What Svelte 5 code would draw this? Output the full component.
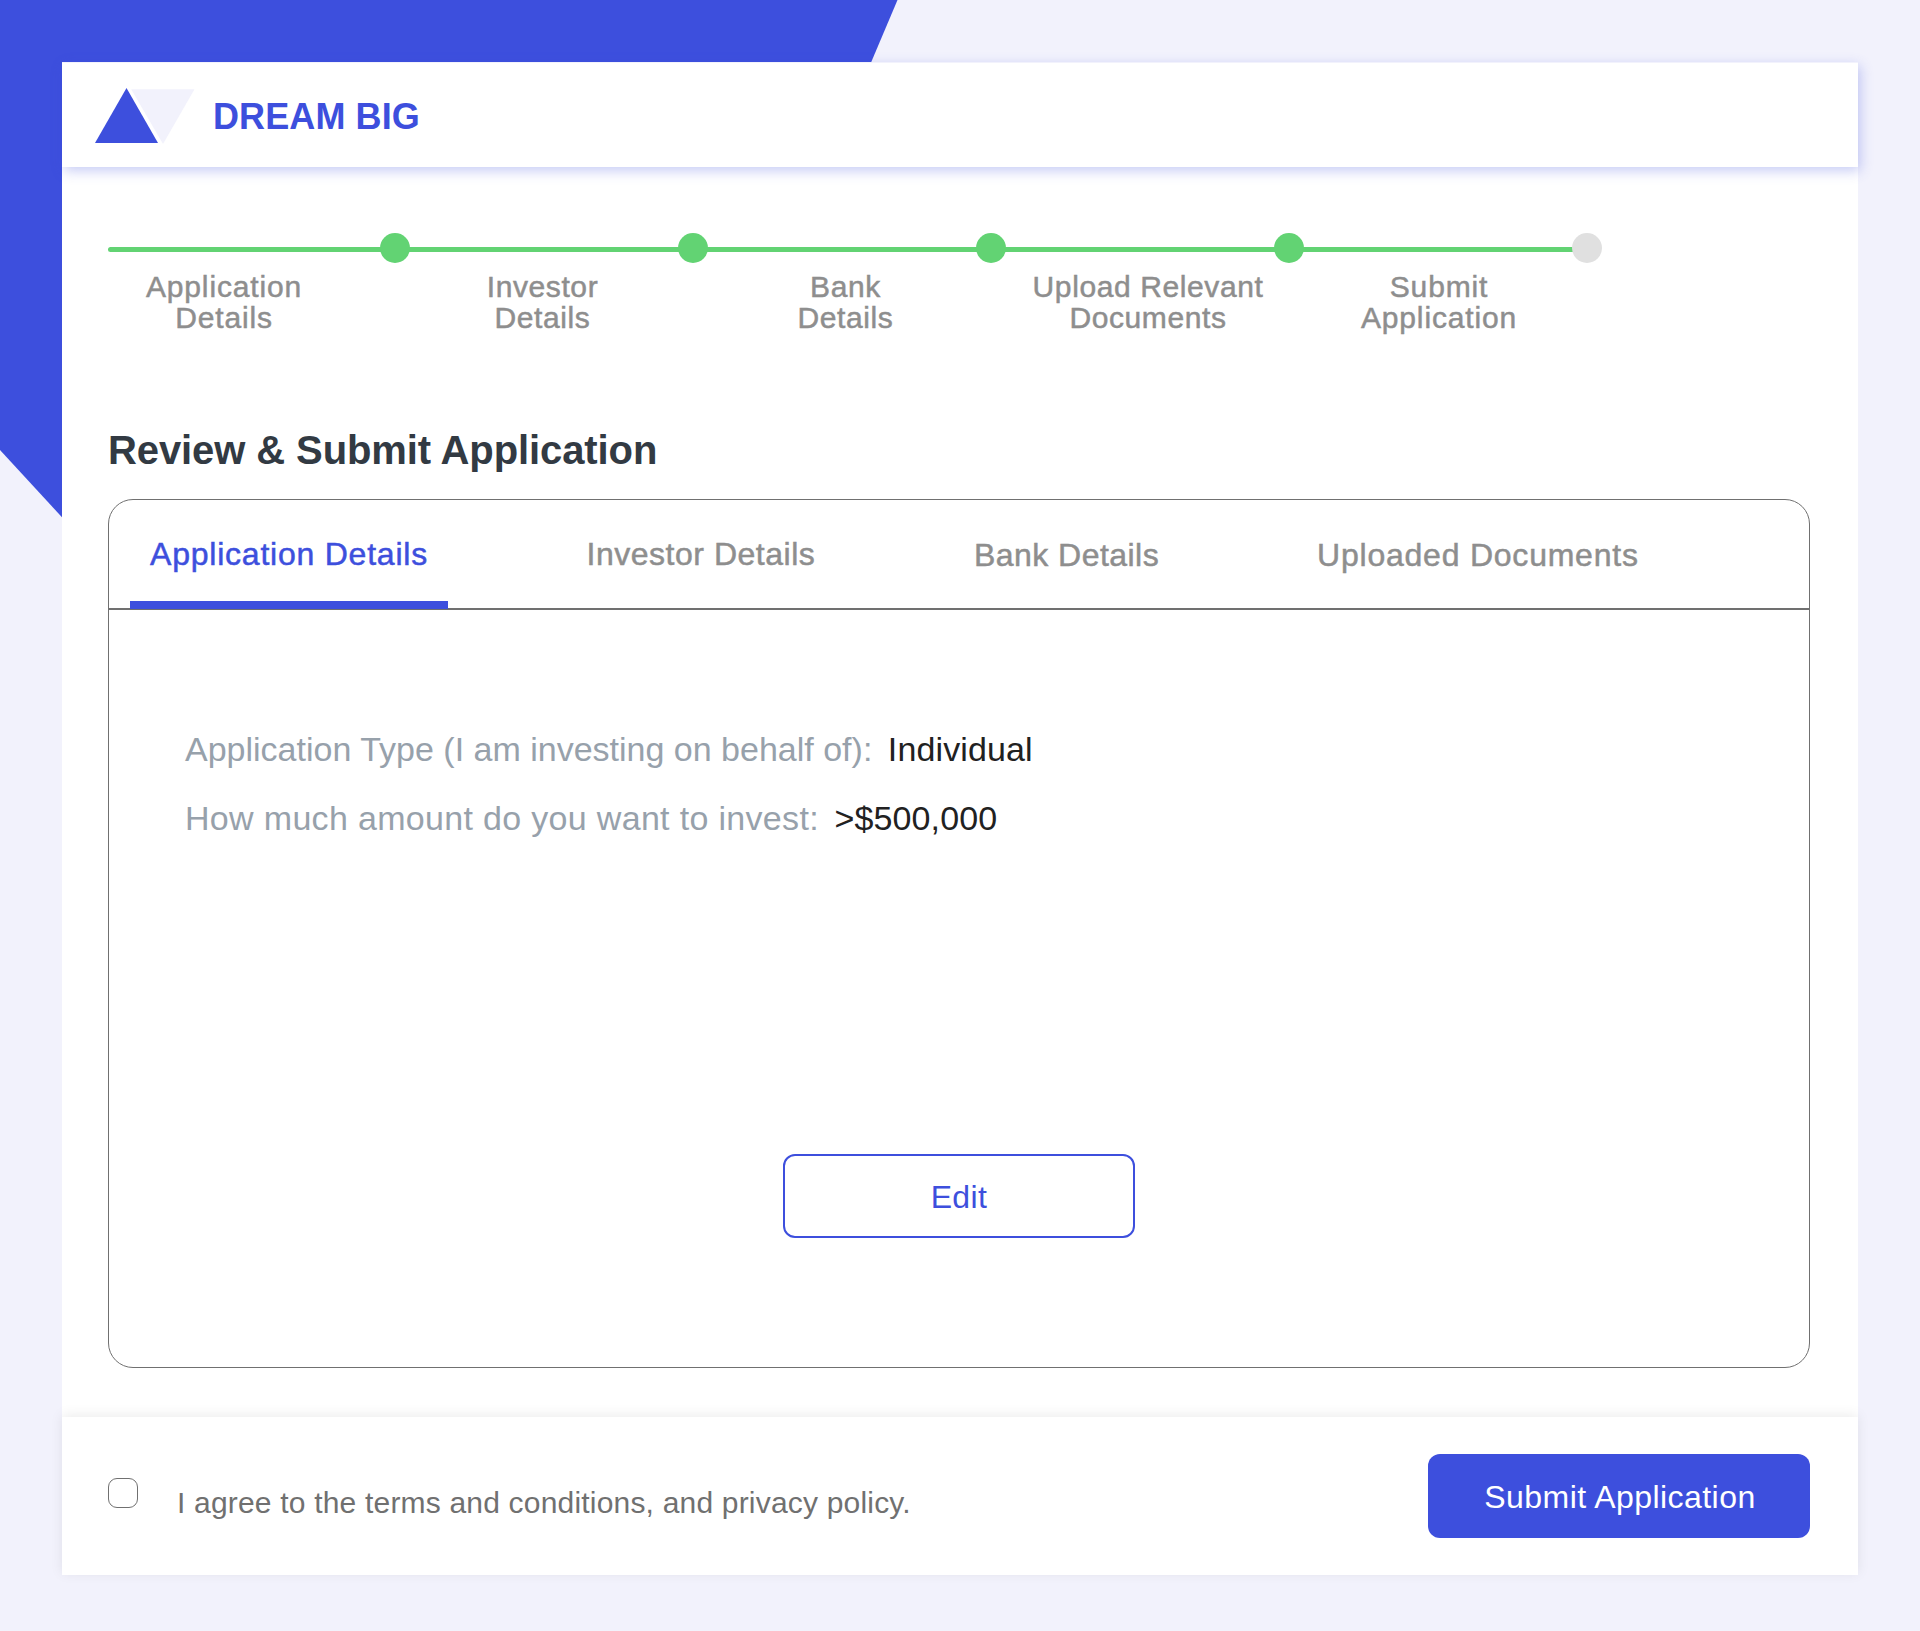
<script>
  const steps = [
    { title: ['Application', 'Details'], done: true },
    { title: ['Investor', 'Details'], done: true },
    { title: ['Bank', 'Details'], done: true },
    { title: ['Upload Relevant', 'Documents'], done: true },
    { title: ['Submit', 'Application'], done: false }
  ];
  const tabs = ['Application Details', 'Investor Details', 'Bank Details', 'Uploaded Documents'];
  const details = [
    { label: 'Application Type (I am investing on behalf of):', value: 'Individual' },
    { label: 'How much amount do you want to invest:', value: '>$500,000' }
  ];
  let active = $state(0);
  let agreed = $state(false);
</script>

<div class="page">
  <svg class="backdrop" width="900" height="600" viewBox="0 0 900 600" aria-hidden="true">
    <polygon points="0,0 897.5,0 845,124 200,667 0,450" />
  </svg>

  <main class="card">
    <header class="header">
      <svg class="logo" width="100" height="56" viewBox="0 0 100 56" aria-hidden="true">
        <polygon class="logo-light" points="36.2,1.2 99.5,1.2 68,56" />
        <polygon class="logo-dark" points="31.5,0 63,55 0,55" />
      </svg>
      <span class="brand">DREAM BIG</span>
    </header>

    <section class="content">
      <div class="track">
        {#each steps as step}
          <span class="segment"></span>
          <span class="dot" class:done={step.done}></span>
        {/each}
      </div>
      <div class="labels">
        {#each steps as step}
          <div class="label">{step.title[0]}<br />{step.title[1]}</div>
        {/each}
      </div>

      <h1>Review &amp; Submit Application</h1>

      <div class="panel">
        <nav class="tabs">
          {#each tabs as tab, i}
            <button class="tab" class:active={active === i} onclick={() => (active = i)}>{tab}</button>
          {/each}
        </nav>
        <div class="details">
          {#each details as row}
            <div class="row"><span class="key">{row.label}</span><span class="value">{row.value}</span></div>
          {/each}
        </div>
        <button class="edit">Edit</button>
      </div>
    </section>

    <footer class="footer">
      <label class="agree">
        <input type="checkbox" bind:checked={agreed} />
        <span>I agree to the terms and conditions, and privacy policy.</span>
      </label>
      <button class="submit">Submit Application</button>
    </footer>
  </main>
</div>

<style>
  :global(body) {
    margin: 0;
    background: #f2f2fc;
  }
  .page {
    position: relative;
    box-sizing: border-box;
    width: 1920px;
    height: 1631px;
    padding: 62px;
    overflow: hidden;
    background: #f2f2fc;
    font-family: 'Liberation Sans', Arial, sans-serif;
  }
  .page * {
    box-sizing: border-box;
  }
  .backdrop {
    position: absolute;
    top: 0;
    left: 0;
    fill: #3d4fdd;
  }
  button {
    font-family: inherit;
    margin: 0;
    padding: 0;
    border: 0;
    background: none;
    cursor: pointer;
    white-space: nowrap;
  }
  .card {
    position: relative;
    display: flex;
    flex-direction: column;
    width: 1796px;
    height: 1513px;
    background: #fff;
  }
  .header {
    display: flex;
    align-items: flex-start;
    height: 105px;
    padding: 25px 33px 0;
    border-top: 1px solid #f2f2fc;
    box-shadow: 2px 4px 12px rgba(61, 79, 221, 0.29);
  }
  .logo {
    flex: none;
  }
  .logo-dark {
    fill: #3d4fdd;
  }
  .logo-light {
    fill: #f2f2fc;
  }
  .brand {
    margin: 9px 0 0 18px;
    font-size: 36px;
    font-weight: 700;
    line-height: 40px;
    letter-spacing: 0.1px;
    color: #3d4fdd;
  }
  .content {
    display: flex;
    flex-direction: column;
    height: 1250px;
    padding: 66px 48px 0 46px;
  }
  .track {
    display: flex;
    height: 30px;
    width: 1494px;
  }
  .segment {
    flex: 1;
    height: 5px;
    margin: 14px -1px 0;
    background: #62d373;
  }
  .segment:first-child {
    flex: 0 0 273px;
    margin-left: 0;
    border-radius: 3px 0 0 3px;
  }
  .dot {
    flex: none;
    z-index: 1;
    width: 30px;
    height: 30px;
    border-radius: 50%;
    background: #e0e0e0;
  }
  .dot.done {
    background: #62d373;
  }
  .labels {
    display: grid;
    grid-template-columns: 232px 405px 201px 404px 178px;
    margin-top: 8px;
    height: 62px;
  }
  .label {
    font-size: 30px;
    line-height: 31px;
    letter-spacing: 0.6px;
    text-align: center;
    white-space: nowrap;
    color: #8e8e8e;
    -webkit-text-stroke: 0.5px #8e8e8e;
  }
  .label:first-child,
  .label:last-child {
    letter-spacing: 0.85px;
  }
  h1 {
    margin: 94px 0 0;
    font-size: 40px;
    font-weight: 700;
    line-height: 46px;
    letter-spacing: -0.1px;
    color: #323a43;
  }
  .panel {
    display: flex;
    flex-direction: column;
    margin-top: 26px;
    height: 869px;
    border: 1px solid #707070;
    border-radius: 25px;
  }
  .tabs {
    display: flex;
    align-items: stretch;
    height: 110px;
    padding-left: 21px;
    border-bottom: 2px solid #707070;
  }
  .tab {
    height: 109px;
    padding: 8px 20px 0;
    border-bottom: 8px solid transparent;
    font-size: 32px;
    letter-spacing: 0.77px;
    color: #8e8e8e;
    -webkit-text-stroke: 0.5px currentColor;
  }
  .tab.active {
    border-bottom-color: #3d4fdd;
    color: #3d4fdd;
  }
  .tab:nth-child(1) {
    width: 318px;
  }
  .tab:nth-child(2) {
    margin-left: 118.5px;
    letter-spacing: 0.52px;
  }
  .tab:nth-child(3) {
    margin-left: 118.7px;
    padding-top: 10px;
    letter-spacing: 0.45px;
  }
  .tab:nth-child(4) {
    margin-left: 118px;
    padding-top: 10px;
  }
  .details {
    padding: 119px 0 0 76px;
  }
  .row {
    display: flex;
    height: 69px;
    font-size: 34px;
    line-height: 40px;
    white-space: nowrap;
  }
  .key {
    color: #97a1ab;
  }
  .row:nth-child(2) .key {
    letter-spacing: 0.32px;
  }
  .value {
    margin-left: 15.5px;
    letter-spacing: 0.13px;
    color: #212121;
  }
  .edit {
    align-self: center;
    width: 352px;
    height: 84px;
    margin-top: 287px;
    padding-top: 2px;
    border: 2px solid #3d4fdd;
    border-radius: 12px;
    font-size: 32px;
    letter-spacing: 0.4px;
    color: #3d4fdd;
  }
  .footer {
    display: flex;
    justify-content: space-between;
    height: 158px;
    padding: 37px 48px 0 46px;
    background: #fff;
    box-shadow: 0 -2px 12px rgba(0, 0, 0, 0.08);
  }
  .agree {
    display: flex;
    align-items: flex-start;
    font-size: 30px;
    line-height: 34px;
    letter-spacing: 0.19px;
    color: #707070;
  }
  .agree span {
    margin: 32px 0 0 39px;
  }
  input {
    appearance: none;
    width: 30px;
    height: 30px;
    margin: 24px 0 0;
    border: 1px solid #707070;
    border-radius: 9px;
    background: #fff;
  }
  input:checked {
    background: #3d4fdd;
  }
  .submit {
    width: 382px;
    height: 84px;
    padding: 2px 0 0 2px;
    border-radius: 12px;
    background: #3d4fdd;
    font-size: 32px;
    letter-spacing: 0.45px;
    color: #fff;
  }
</style>
